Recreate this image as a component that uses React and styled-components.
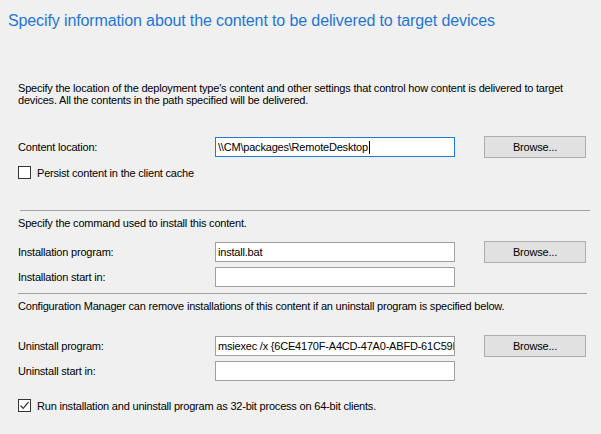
import React from "react";
import styled, { createGlobalStyle } from "styled-components";

const Global = createGlobalStyle`
  html, body { margin: 0; padding: 0; background: #f0f0f0; }
  body { font-family: "Liberation Sans", Arial, sans-serif; color: #000; }
`;

const Page = styled.div`
  width: 601px;
  height: 434px;
  background: #f0f0f0;
  display: flex;
  flex-direction: column;
  overflow: hidden;
  box-sizing: border-box;
`;

const Title = styled.h1`
  margin: 11px 0 0 8px;
  font-size: 16px;
  line-height: 20px;
  font-weight: normal;
  letter-spacing: -0.12px;
  color: #1f76d8;
  white-space: nowrap;
`;

const Body = styled.div`
  display: flex;
  flex-direction: column;
  padding-left: 18px;
  padding-right: 14px;
  font-size: 11px;
  letter-spacing: -0.2px;
`;

const Text = styled.p`
  margin: ${(p) => p.$mt || 0}px 0 0 0;
  font-size: 11px;
  line-height: 12px;
  color: #000;
  white-space: nowrap;
`;

const FormRow = styled.div`
  display: grid;
  grid-template-columns: 197px 240px 102px;
  align-items: center;
  height: 22px;
  margin-top: ${(p) => p.$mt || 0}px;
`;

const Label = styled.span`
  font-size: 11px;
  line-height: 12px;
`;

const Input = styled.div`
  box-sizing: border-box;
  height: 20px;
  background: #fff;
  border: 1px solid ${(p) => (p.$focused ? "#1a7ad4" : "#a0a0a0")};
  font-size: 11px;
  line-height: 18px;
  padding-left: 2px;
  white-space: nowrap;
  overflow: hidden;
  display: flex;
  align-items: center;
`;

const Caret = styled.span`
  display: inline-block;
  width: 1px;
  height: 13px;
  background: #000;
  margin-left: 1px;
`;

const Button = styled.button`
  box-sizing: border-box;
  height: 22px;
  width: 102px;
  margin-left: 29px;
  background: #e1e1e1;
  border: 1px solid #adadad;
  font-family: inherit;
  font-size: 11px;
  letter-spacing: -0.2px;
  color: #000;
  padding: 0;
`;

const CheckRow = styled.label`
  display: flex;
  align-items: center;
  gap: 6px;
  height: 13px;
  margin-top: ${(p) => p.$mt || 0}px;
  font-size: 11px;
  white-space: nowrap;
`;

const Box = styled.span`
  box-sizing: border-box;
  flex: none;
  width: 13px;
  height: 13px;
  border: 1px solid #333;
  background: #fff;
  display: flex;
  align-items: center;
  justify-content: center;
`;

const Separator = styled.div`
  height: 1px;
  background: #a0a0a0;
  margin-top: ${(p) => p.$mt || 0}px;
  margin-left: ${(p) => p.$ml || 0}px;
  width: ${(p) => p.$w}px;
`;

function Check({ checked, children, mt }) {
  return (
    <CheckRow $mt={mt}>
      <Box>
        {checked && (
          <svg width="11" height="11" viewBox="0 0 11 11">
            <path d="M1.5 5.5 L4.2 8.3 L9.5 2" fill="none" stroke="#333" strokeWidth="1.2" />
          </svg>
        )}
      </Box>
      <span>{children}</span>
    </CheckRow>
  );
}

export default function App() {
  return (
    <Page>
      <Global />
      <Title>Specify information about the content to be delivered to target devices</Title>
      <Body>
        <Text $mt={51}>
          Specify the location of the deployment type's content and other settings that control how content is delivered to target
          <br />
          devices. All the contents in the path specified will be delivered.
        </Text>
        <FormRow $mt={30}>
          <Label>Content location:</Label>
          <Input $focused>
            {"\\\\CM\\packages\\RemoteDesktop"}
            <Caret />
          </Input>
          <Button>Browse...</Button>
        </FormRow>
        <Check mt={8}>Persist content in the client cache</Check>
        <Separator $mt={31} $ml={2} $w={570} />
        <Text $mt={6}>Specify the command used to install this content.</Text>
        <FormRow $mt={12}>
          <Label>Installation program:</Label>
          <Input>install.bat</Input>
          <Button>Browse...</Button>
        </FormRow>
        <FormRow $mt={3}>
          <Label>Installation start in:</Label>
          <Input />
        </FormRow>
        <Separator $mt={5} $w={569} />
        <Text $mt={6}>
          Configuration Manager can remove installations of this content if an uninstall program is specified below.
        </Text>
        <FormRow $mt={23}>
          <Label>Uninstall program:</Label>
          <Input>msiexec /x {"{"}6CE4170F-A4CD-47A0-ABFD-61C59E</Input>
          <Button>Browse...</Button>
        </FormRow>
        <FormRow $mt={3}>
          <Label>Uninstall start in:</Label>
          <Input />
        </FormRow>
        <Check checked mt={17}>Run installation and uninstall program as 32-bit process on 64-bit clients.</Check>
      </Body>
    </Page>
  );
}
